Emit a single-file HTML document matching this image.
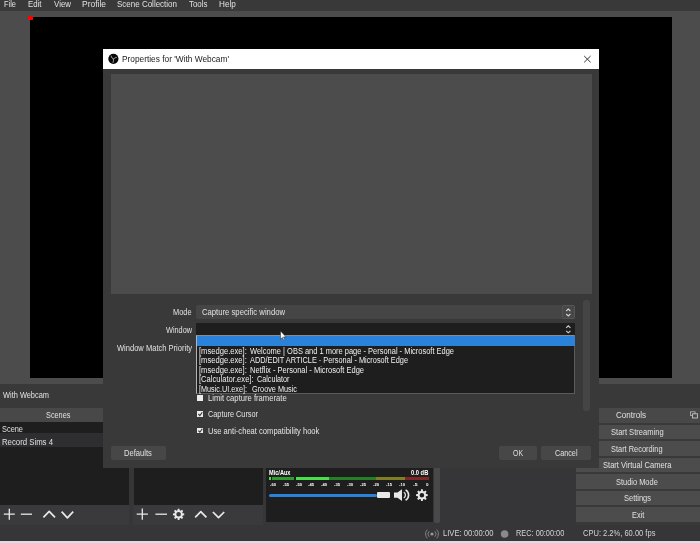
<!DOCTYPE html>
<html><head><meta charset="utf-8"><title>OBS</title>
<style>
html,body{margin:0;padding:0;}
body{width:700px;height:543px;overflow:hidden;background:#3a393a;position:relative;font-family:"Liberation Sans",sans-serif;}
.a{position:absolute;}
.t{position:absolute;white-space:nowrap;line-height:1;transform-origin:0 0;}
#tx{position:absolute;left:0;top:0;width:700px;height:543px;will-change:transform;}
svg{position:absolute;left:0;top:0;}
</style></head><body>

<div class="a" style="left:0px;top:11px;width:700px;height:372.5px;background:#4c4c4c;"></div>
<div class="a" style="left:29.5px;top:17px;width:642.5px;height:361px;background:#000;"></div>
<div class="a" style="left:28px;top:15.5px;width:4.5px;height:4.5px;background:#f00;"></div>
<div class="a" style="left:0px;top:383.5px;width:700px;height:24px;background:#3a393a;"></div>
<div class="a" style="left:0px;top:407.5px;width:130px;height:14px;background:#494849;"></div>
<div class="a" style="left:576px;top:407.5px;width:124px;height:15.2px;background:#494849;"></div>
<div class="a" style="left:0px;top:421.5px;width:576px;height:119.5px;background:#363537;"></div>
<div class="a" style="left:0px;top:524.5px;width:700px;height:16.5px;background:#363537;"></div>
<div class="a" style="left:0px;top:504.5px;width:129.3px;height:20px;background:#3a393b;"></div>
<div class="a" style="left:133.3px;top:504.5px;width:129.5px;height:20px;background:#3a393b;"></div>
<div class="a" style="left:0px;top:421.5px;width:129.3px;height:83px;background:#1f1e1f;"></div>
<div class="a" style="left:0px;top:432.5px;width:129.3px;height:14.3px;background:#2e2d2f;"></div>
<div class="a" style="left:133.5px;top:421.5px;width:129.5px;height:83px;background:#1f1e1f;"></div>
<div class="a" style="left:266.4px;top:421.5px;width:167px;height:100.5px;background:#1f1e1f;"></div>
<div class="a" style="left:433.8px;top:421.5px;width:6.2px;height:101px;background:#4a494a;border-radius:2px;"></div>
<div class="a" style="left:576px;top:425px;width:124px;height:14.4px;background:#4c4c4c;"></div>
<div class="a" style="left:576px;top:441.43px;width:124px;height:14.4px;background:#4c4c4c;"></div>
<div class="a" style="left:576px;top:457.86px;width:124px;height:14.4px;background:#4c4c4c;"></div>
<div class="a" style="left:576px;top:474.29px;width:124px;height:14.4px;background:#4c4c4c;"></div>
<div class="a" style="left:576px;top:490.72px;width:124px;height:14.4px;background:#4c4c4c;"></div>
<div class="a" style="left:576px;top:507.15px;width:124px;height:14.4px;background:#4c4c4c;"></div>
<div class="a" style="left:0px;top:541px;width:700px;height:3px;background:#dcdce4;"></div>
<div class="a" style="left:269px;top:477.3px;width:2.2px;height:2.7px;background:#4be04b;"></div>
<div class="a" style="left:272px;top:477.3px;width:22px;height:2.7px;background:#2e9c2e;"></div>
<div class="a" style="left:296px;top:477.3px;width:33.4px;height:2.7px;background:#4be04b;"></div>
<div class="a" style="left:329.4px;top:477.3px;width:46.4px;height:2.7px;background:#267f26;"></div>
<div class="a" style="left:375.8px;top:477.3px;width:29.6px;height:2.7px;background:#7f7f26;"></div>
<div class="a" style="left:405.4px;top:477.3px;width:23.8px;height:2.7px;background:#7f2626;"></div>
<div class="a" style="left:269.3px;top:494px;width:108px;height:3px;background:#2a82da;border-radius:1.5px;"></div>
<div class="a" style="left:376.5px;top:492.2px;width:13.5px;height:5.8px;background:#e8e8e8;border-radius:1px;"></div>
<div class="a" style="left:103px;top:49px;width:496px;height:419px;background:#3a393a;"></div>
<div class="a" style="left:103px;top:48.8px;width:496px;height:20.5px;background:#fff;"></div>
<div class="a" style="left:111px;top:74.2px;width:481px;height:220px;background:#4c4c4c;"></div>
<div class="a" style="left:196px;top:305.3px;width:379.4px;height:13.3px;background:#464546;border-radius:2px;"></div>
<div class="a" style="left:561.5px;top:305.3px;width:13.9px;height:13.3px;background:#484748;border-radius:2px;box-sizing:border-box;border:1px solid #565556;"></div>
<div class="a" style="left:196px;top:322.8px;width:379.4px;height:12px;background:#1f1e1f;"></div>
<div class="a" style="left:196px;top:335.3px;width:379.4px;height:58.4px;background:#1f1e1f;box-sizing:border-box;border:1px solid #5a5a5a;border-left-color:#b4b4b4;border-top-color:#8c8c8c;"></div>
<div class="a" style="left:197px;top:336px;width:378.4px;height:10px;background:#2a82da;"></div>
<div class="a" style="left:583px;top:299.7px;width:6.6px;height:111.3px;background:#464546;border-radius:3px;"></div>
<div class="a" style="left:110.7px;top:445.7px;width:55px;height:14px;background:#484748;border-radius:2px;"></div>
<div class="a" style="left:499px;top:445.7px;width:37.5px;height:14px;background:#484748;border-radius:2px;"></div>
<div class="a" style="left:541px;top:445.7px;width:50px;height:14px;background:#484748;border-radius:2px;"></div>
<div class="a" style="left:197.2px;top:395.2px;width:5.8px;height:5.4px;background:#ececec;"></div>
<div class="a" style="left:197.2px;top:411.3px;width:5.8px;height:5.6px;background:#ececec;"></div>
<div class="a" style="left:197.2px;top:427.6px;width:5.8px;height:5.7px;background:#ececec;"></div>
<svg width="700" height="543" viewBox="0 0 700 543">
<path d="M3.8 514.2H14.8M9.3 508.7V519.7" stroke="#e8e8e8" stroke-width="1.3" fill="none"/>
<path d="M20.8 514.2H32" stroke="#e8e8e8" stroke-width="1.3" fill="none"/>
<path d="M43.4 517.3L49.2 511.3L55 517.3" stroke="#e8e8e8" stroke-width="1.7" stroke-linejoin="round" fill="none"/>
<path d="M61.6 511.6L67.4 517.8L73.2 511.6" stroke="#e8e8e8" stroke-width="1.7" stroke-linejoin="round" fill="none"/>
<path d="M136.7 514.2H147.9M142.3 508.6V519.8" stroke="#e8e8e8" stroke-width="1.3" fill="none"/>
<path d="M155.4 514.2H167" stroke="#e8e8e8" stroke-width="1.3" fill="none"/>
<path d="M177.51 510.24L177.76 508.66L179.44 508.66L179.69 510.24L180.70 510.66L181.99 509.72L183.18 510.91L182.24 512.20L182.66 513.21L184.24 513.46L184.24 515.14L182.66 515.39L182.24 516.40L183.18 517.69L181.99 518.88L180.70 517.94L179.69 518.36L179.44 519.94L177.76 519.94L177.51 518.36L176.50 517.94L175.21 518.88L174.02 517.69L174.96 516.40L174.54 515.39L172.96 515.14L172.96 513.46L174.54 513.21L174.96 512.20L174.02 510.91L175.21 509.72L176.50 510.66ZM176.30 514.30a2.3 2.3 0 1 0 4.6 0a2.3 2.3 0 1 0 -4.6 0Z" fill="#e8e8e8" fill-rule="evenodd"/>
<path d="M195.2 517.3L200.8 511.6L206.4 517.3" stroke="#e8e8e8" stroke-width="1.7" stroke-linejoin="round" fill="none"/>
<path d="M212.9 512L218.55 517.7L224.2 512" stroke="#e8e8e8" stroke-width="1.7" stroke-linejoin="round" fill="none"/>
<path d="M420.79 491.05L421.03 489.36L422.77 489.36L423.01 491.05L424.05 491.48L425.41 490.46L426.64 491.69L425.62 493.05L426.05 494.09L427.74 494.33L427.74 496.07L426.05 496.31L425.62 497.35L426.64 498.71L425.41 499.94L424.05 498.92L423.01 499.35L422.77 501.04L421.03 501.04L420.79 499.35L419.75 498.92L418.39 499.94L417.16 498.71L418.18 497.35L417.75 496.31L416.06 496.07L416.06 494.33L417.75 494.09L418.18 493.05L417.16 491.69L418.39 490.46L419.75 491.48ZM419.60 495.20a2.3 2.3 0 1 0 4.6 0a2.3 2.3 0 1 0 -4.6 0Z" fill="#e8e8e8" fill-rule="evenodd"/>
<path d="M394 492.5h3.5l4.5-3.2v11.6l-4.5-3.2h-3.5z" fill="#e8e8e8"/>
<path d="M403.8 492.3a3.2 3.2 0 0 1 0 5.6" stroke="#e8e8e8" stroke-width="1.2" fill="none"/>
<path d="M405.6 489.9a6 6 0 0 1 0 10.4" stroke="#e8e8e8" stroke-width="1.6" fill="none"/>
<path d="M566.2 311l2.1-2l2.1 2M566.2 314l2.1 2l2.1-2" stroke="#d4d4d4" stroke-width="1.1" fill="none"/>
<path d="M566.2 327.8l2.1-2l2.1 2M566.2 330.8l2.1 2l2.1-2" stroke="#d4d4d4" stroke-width="1.1" fill="none"/>
<path d="M584.2 56l6.4 6.3M590.6 56l-6.4 6.3" stroke="#333" stroke-width="1" fill="none"/>
<circle cx="113.4" cy="58.8" r="5.1" fill="#080808"/>
<path d="M111.1 56q.5 2.6 2.4 3.2M116.4 57.4q-2.2 .2 -2.9 1.8M113.5 59.2q.2 2-.4 3.3" stroke="#a8a8a8" stroke-width="0.9" stroke-linecap="round" fill="none"/>
<path d="M198.4 414l1.5 1.6l2.4-3.4" stroke="#333" stroke-width="1.1" fill="none"/>
<path d="M198.4 430.6l1.5 1.6l2.4-3.4" stroke="#333" stroke-width="1.1" fill="none"/>
<circle cx="432" cy="534" r="1.6" fill="#999"/>
<path d="M429.2 531.2a4 4 0 0 0 0 5.6M434.8 531.2a4 4 0 0 1 0 5.6M427.3 529.6a6.4 6.4 0 0 0 0 8.8M436.7 529.6a6.4 6.4 0 0 1 0 8.8" stroke="#888" stroke-width="0.9" fill="none"/>
<circle cx="504.6" cy="534" r="3.8" fill="#8a8a8a"/>
<rect x="690.5" y="411.8" width="4.6" height="3.8" fill="none" stroke="#b8b8b8" stroke-width="0.8"/><rect x="692.6" y="413.8" width="4.8" height="4.2" fill="#494849" stroke="#c8c8c8" stroke-width="0.9"/>
<path d="M280.5 331v8.2l1.9-1.8l1.4 3l1.1-.5l-1.4-3h2.6z" fill="#fff" stroke="#222" stroke-width="0.5"/>
</svg>
<div id="tx">
<span class="t" style="left:4.2px;top:0.00px;font-size:9px;color:#e1e0e1;transform:scaleX(0.8267);">File</span>
<span class="t" style="left:28px;top:0.00px;font-size:9px;color:#e1e0e1;transform:scaleX(0.8701);">Edit</span>
<span class="t" style="left:53.7px;top:0.00px;font-size:9px;color:#e1e0e1;transform:scaleX(0.8781);">View</span>
<span class="t" style="left:82px;top:0.00px;font-size:9px;color:#e1e0e1;transform:scaleX(0.9406);">Profile</span>
<span class="t" style="left:117px;top:0.00px;font-size:9px;color:#e1e0e1;transform:scaleX(0.8883);">Scene Collection</span>
<span class="t" style="left:188.8px;top:0.00px;font-size:9px;color:#e1e0e1;transform:scaleX(0.8803);">Tools</span>
<span class="t" style="left:218.8px;top:0.00px;font-size:9px;color:#e1e0e1;transform:scaleX(0.9073);">Help</span>
<span class="t" style="left:122px;top:55.00px;font-size:9px;color:#222;transform:scaleX(0.9239);">Properties for 'With Webcam'</span>
<span class="t" style="left:173px;top:308.00px;font-size:9px;color:#e1e0e1;transform:scaleX(0.8217);">Mode</span>
<span class="t" style="left:165.5px;top:326.00px;font-size:9px;color:#e1e0e1;transform:scaleX(0.8121);">Window</span>
<span class="t" style="left:117px;top:344.00px;font-size:9px;color:#e1e0e1;transform:scaleX(0.8377);">Window Match Priority</span>
<span class="t" style="left:202px;top:308.00px;font-size:9px;color:#e1e0e1;transform:scaleX(0.8553);">Capture specific window</span>
<span class="t" style="left:199.4px;top:347.00px;font-size:8.5px;color:#f0f0f0;transform:scaleX(0.8953);">[msedge.exe]:</span>
<span class="t" style="left:250px;top:347.00px;font-size:8.5px;color:#f0f0f0;transform:scaleX(0.8788);">Welcome | OBS and 1 more page - Personal - Microsoft Edge</span>
<span class="t" style="left:199.4px;top:356.00px;font-size:8.5px;color:#f0f0f0;transform:scaleX(0.8953);">[msedge.exe]:</span>
<span class="t" style="left:250px;top:356.00px;font-size:8.5px;color:#f0f0f0;transform:scaleX(0.8658);">ADD/EDIT ARTICLE - Personal - Microsoft Edge</span>
<span class="t" style="left:199.4px;top:366.00px;font-size:8.5px;color:#f0f0f0;transform:scaleX(0.8953);">[msedge.exe]:</span>
<span class="t" style="left:250px;top:366.00px;font-size:8.5px;color:#f0f0f0;transform:scaleX(0.8839);">Netflix - Personal - Microsoft Edge</span>
<span class="t" style="left:199.4px;top:375.00px;font-size:8.5px;color:#f0f0f0;transform:scaleX(0.8958);">[Calculator.exe]:</span>
<span class="t" style="left:256.6px;top:375.00px;font-size:8.5px;color:#f0f0f0;transform:scaleX(0.8464);">Calculator</span>
<span class="t" style="left:199.4px;top:385.00px;font-size:8.5px;color:#f0f0f0;transform:scaleX(0.8538);">[Music.UI.exe]:</span>
<span class="t" style="left:252px;top:385.00px;font-size:8.5px;color:#f0f0f0;transform:scaleX(0.8582);">Groove Music</span>
<span class="t" style="left:208.2px;top:394.00px;font-size:9px;color:#e4e4e4;transform:scaleX(0.8504);">Limit capture framerate</span>
<span class="t" style="left:208.2px;top:410.00px;font-size:9px;color:#e4e4e4;transform:scaleX(0.8126);">Capture Cursor</span>
<span class="t" style="left:208.2px;top:427.00px;font-size:9px;color:#e4e4e4;transform:scaleX(0.8434);">Use anti-cheat compatibility hook</span>
<span class="t" style="left:124.3px;top:449.00px;font-size:9px;color:#e1e0e1;transform:scaleX(0.8416);">Defaults</span>
<span class="t" style="left:513px;top:449.00px;font-size:9px;color:#e1e0e1;transform:scaleX(0.7683);">OK</span>
<span class="t" style="left:554.8px;top:449.00px;font-size:9px;color:#e1e0e1;transform:scaleX(0.8031);">Cancel</span>
<span class="t" style="left:3px;top:391.00px;font-size:9px;color:#e1e0e1;transform:scaleX(0.8235);">With Webcam</span>
<span class="t" style="left:45.6px;top:411.00px;font-size:9px;color:#e1e0e1;transform:scaleX(0.8125);">Scenes</span>
<span class="t" style="left:2px;top:425.00px;font-size:9px;color:#e1e0e1;transform:scaleX(0.8225);">Scene</span>
<span class="t" style="left:2px;top:438.00px;font-size:9px;color:#e1e0e1;transform:scaleX(0.8639);">Record Sims 4</span>
<span class="t" style="left:616px;top:411.00px;font-size:9px;color:#e1e0e1;transform:scaleX(0.8951);">Controls</span>
<span class="t" style="left:611.2px;top:428.00px;font-size:9px;color:#e1e0e1;transform:scaleX(0.8412);">Start Streaming</span>
<span class="t" style="left:611.4px;top:445.00px;font-size:9px;color:#e1e0e1;transform:scaleX(0.8236);">Start Recording</span>
<span class="t" style="left:603.4px;top:461.00px;font-size:9px;color:#e1e0e1;transform:scaleX(0.8406);">Start Virtual Camera</span>
<span class="t" style="left:616.4px;top:478.00px;font-size:9px;color:#e1e0e1;transform:scaleX(0.8270);">Studio Mode</span>
<span class="t" style="left:624.2px;top:494.00px;font-size:9px;color:#e1e0e1;transform:scaleX(0.8300);">Settings</span>
<span class="t" style="left:631.7px;top:511.00px;font-size:9px;color:#e1e0e1;transform:scaleX(0.8125);">Exit</span>
<span class="t" style="left:443.2px;top:529.00px;font-size:9px;color:#d4d4d4;transform:scaleX(0.8464);">LIVE: 00:00:00</span>
<span class="t" style="left:516.2px;top:529.00px;font-size:9px;color:#d4d4d4;transform:scaleX(0.8180);">REC: 00:00:00</span>
<span class="t" style="left:582.6px;top:529.00px;font-size:9px;color:#d4d4d4;transform:scaleX(0.8365);">CPU: 2.2%, 60.00 fps</span>
<span class="t" style="left:269.3px;top:470.00px;font-size:6.3px;color:#fff;transform:scaleX(0.8900);font-weight:bold;">Mic/Aux</span>
<span class="t" style="left:411.2px;top:470.00px;font-size:6.3px;color:#fff;transform:scaleX(0.9150);font-weight:bold;">0.0 dB</span>
<span class="t" style="left:269.9px;top:483.00px;font-size:4.2px;color:#fff;transform:scaleX(0.9897);font-weight:bold;">-60</span>
<span class="t" style="left:282.5px;top:483.00px;font-size:4.2px;color:#fff;transform:scaleX(0.9897);font-weight:bold;">-55</span>
<span class="t" style="left:295.6px;top:483.00px;font-size:4.2px;color:#fff;transform:scaleX(0.9897);font-weight:bold;">-50</span>
<span class="t" style="left:308.4px;top:483.00px;font-size:4.2px;color:#fff;transform:scaleX(0.9897);font-weight:bold;">-45</span>
<span class="t" style="left:321.3px;top:483.00px;font-size:4.2px;color:#fff;transform:scaleX(0.9897);font-weight:bold;">-40</span>
<span class="t" style="left:334.4px;top:483.00px;font-size:4.2px;color:#fff;transform:scaleX(0.9897);font-weight:bold;">-35</span>
<span class="t" style="left:347px;top:483.00px;font-size:4.2px;color:#fff;transform:scaleX(0.9897);font-weight:bold;">-30</span>
<span class="t" style="left:360px;top:483.00px;font-size:4.2px;color:#fff;transform:scaleX(0.9897);font-weight:bold;">-25</span>
<span class="t" style="left:373px;top:483.00px;font-size:4.2px;color:#fff;transform:scaleX(0.9897);font-weight:bold;">-20</span>
<span class="t" style="left:386.3px;top:483.00px;font-size:4.2px;color:#fff;transform:scaleX(0.9897);font-weight:bold;">-15</span>
<span class="t" style="left:399.2px;top:483.00px;font-size:4.2px;color:#fff;transform:scaleX(0.9897);font-weight:bold;">-10</span>
<span class="t" style="left:413.25px;top:483.00px;font-size:4.2px;color:#fff;transform:scaleX(1.2050);font-weight:bold;">-5</span>
<span class="t" style="left:426.25px;top:483.00px;font-size:4.2px;color:#fff;transform:scaleX(1.0667);font-weight:bold;">0</span>
</div>
</body></html>
